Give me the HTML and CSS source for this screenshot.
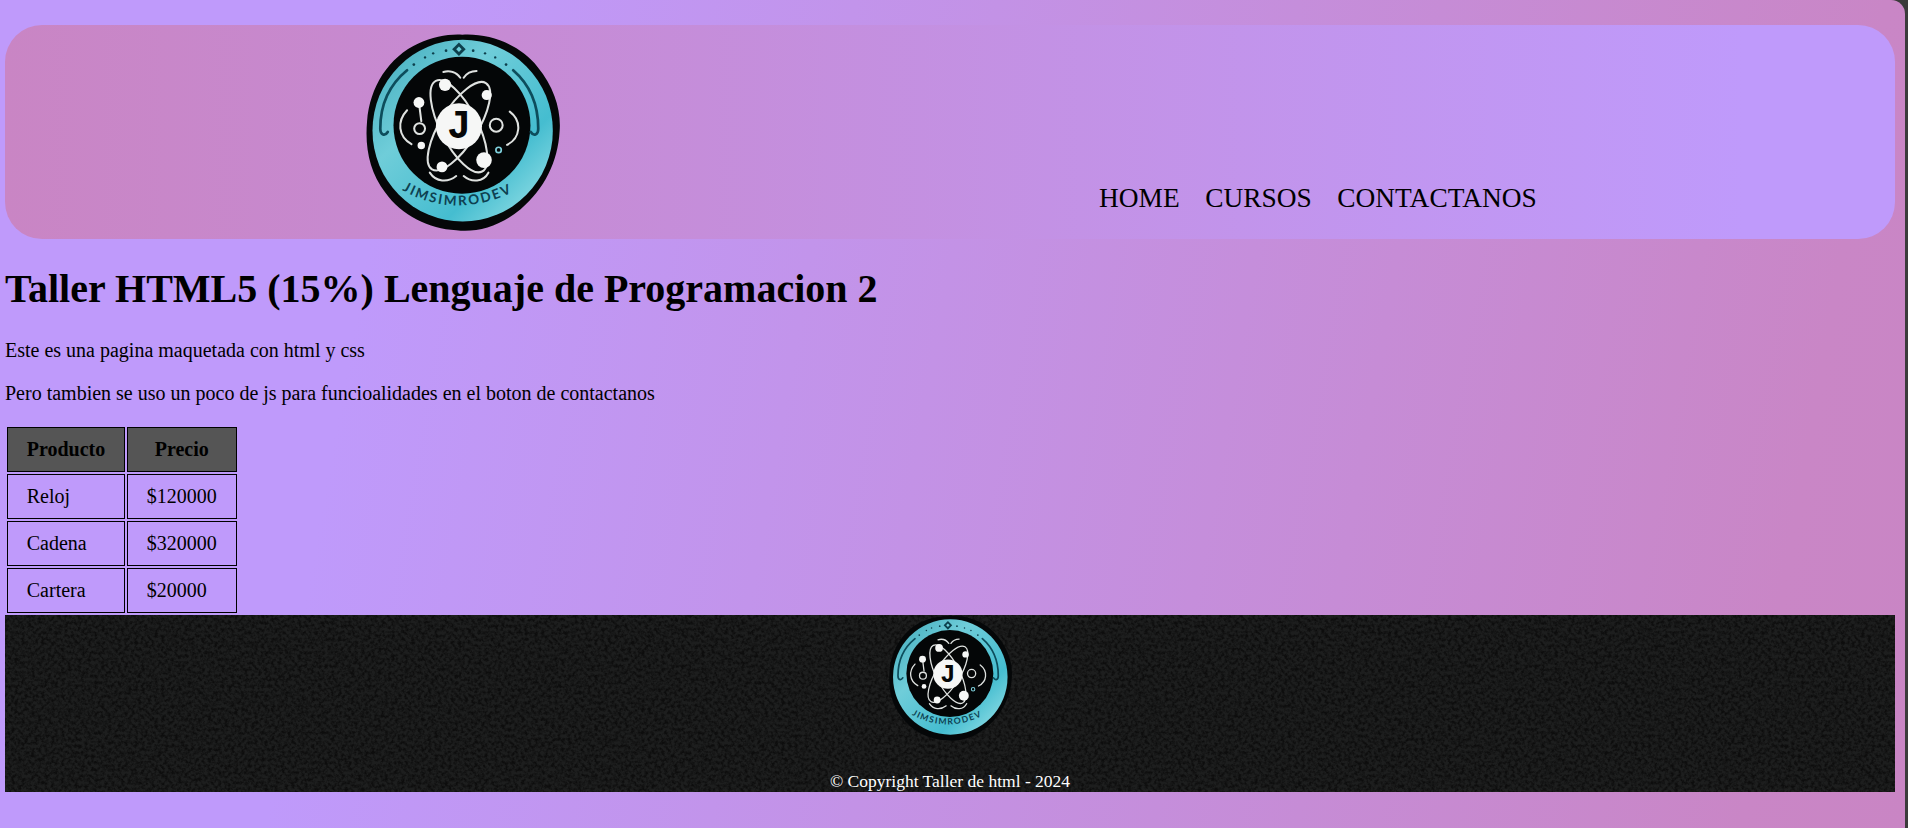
FILE: index.html
```html
<!DOCTYPE html>
<html lang="es">
<head>
<meta charset="utf-8">
<title>Taller HTML5</title>
<link rel="stylesheet" href="styles.css">
</head>
<body>
<svg class="defs" width="0" height="0" aria-hidden="true">
  <defs>
    <linearGradient id="teal" x1="0" y1="0" x2="1" y2="1">
      <stop offset="0" stop-color="#3fa9ba"/>
      <stop offset=".35" stop-color="#6fcdd9"/>
      <stop offset=".7" stop-color="#45bdd0"/>
      <stop offset=".88" stop-color="#7fd6e0"/>
      <stop offset="1" stop-color="#4fc0d2"/>
    </linearGradient>
    <filter id="grain" x="0" y="0" width="100%" height="100%" color-interpolation-filters="sRGB">
      <feTurbulence type="fractalNoise" baseFrequency=".3" numOctaves="3" seed="7"/>
      <feColorMatrix type="matrix" values="0 0 0 0 .05  0 0 0 0 .05  0 0 0 0 .05  2.6 0 0 0 -.95"/>
    </filter>
    <path id="nameArc" d="M190 503 Q 360 600 555 490"/>
    <symbol id="logo" viewBox="70 40 600 590">
      <path d="M368 45 C450 40 540 75 590 140 C640 200 660 270 655 330 C650 420 610 500 540 560 C480 610 410 630 350 622 C270 618 190 580 140 510 C95 450 80 380 87 300 C95 200 150 110 240 70 C280 52 330 42 368 45Z" fill="#050708"/>
      <ellipse cx="369" cy="328" rx="266" ry="268" fill="url(#teal)"/>
      <circle cx="367" cy="312" r="202" fill="#040607"/>
      <g class="ring-art">
        <path d="M205 150 C150 195 126 255 126 322 C126 342 140 345 148 332"/>
        <path d="M518 150 C570 195 592 255 592 322 C592 342 578 345 570 332"/>
      </g>
      <path class="dark-fill" d="M358 68 L378 88 L358 108 L338 88Z"/>
      <path class="teal-fill" d="M358 80 L366 88 L358 96 L350 88Z"/>
      <g class="dark-fill">
        <circle cx="320" cy="92" r="4"/><circle cx="400" cy="92" r="4"/>
        <circle cx="282" cy="100" r="3.5"/><circle cx="435" cy="100" r="3.5"/>
        <circle cx="258" cy="112" r="3.5"/><circle cx="465" cy="112" r="3.5"/>
        <circle cx="225" cy="133" r="4"/><circle cx="497" cy="133" r="4"/>
      </g>
      <g class="orbit">
        <ellipse cx="358" cy="315" rx="55" ry="150" transform="rotate(-27 358 315)"/>
        <ellipse cx="358" cy="315" rx="55" ry="150" transform="rotate(32 358 315)"/>
        <path d="M240 245 L247 300"/>
        <path d="M205 268 C175 300 178 345 218 368"/>
        <path d="M508 272 C545 300 540 350 500 370"/>
        <path d="M312 155 C330 150 350 155 362 172"/>
        <path d="M410 152 C395 152 380 160 372 172"/>
        <path d="M272 452 C290 480 325 482 350 462"/>
        <path d="M445 452 C430 480 395 482 372 462"/>
        <circle cx="242" cy="322" r="16"/>
        <circle cx="468" cy="312" r="19"/>
      </g>
      <circle cx="358" cy="315" r="68" fill="#f6f7f6"/>
      <g fill="#f6f7f6">
        <circle cx="317" cy="193" r="18"/><circle cx="440" cy="223" r="15"/>
        <circle cx="240" cy="245" r="16"/><circle cx="247" cy="372" r="11"/>
        <circle cx="432" cy="415" r="23"/><circle cx="308" cy="435" r="16"/>
      </g>
      <circle cx="475" cy="385" r="8" fill="none" stroke="#7fd0dc" stroke-width="5"/>
      <text class="logo-j" x="358" y="350" text-anchor="middle">J</text>
      <text class="logo-name"><textPath href="#nameArc">JIMSIMRODEV</textPath></text>
    </symbol>
  </defs>
</svg>

<header class="site-header">
  <svg class="logo-large"><use href="#logo"/></svg>
  <nav class="main-nav">
    <a href="#">HOME</a>
    <a href="#">CURSOS</a>
    <a href="#">CONTACTANOS</a>
  </nav>
</header>

<main>
  <h1>Taller HTML5 (15%) Lenguaje de Programacion 2</h1>
  <p>Este es una pagina maquetada con html y css</p>
  <p>Pero tambien se uso un poco de js para funcioalidades en el boton de contactanos</p>
  <table class="price-table">
    <thead>
      <tr><th>Producto</th><th>Precio</th></tr>
    </thead>
    <tbody>
      <tr><td>Reloj</td><td>$120000</td></tr>
      <tr><td>Cadena</td><td>$320000</td></tr>
      <tr><td>Cartera</td><td>$20000</td></tr>
    </tbody>
  </table>
</main>

<footer class="site-footer">
  <svg class="footer-noise" width="100%" height="100%" aria-hidden="true"><rect width="100%" height="100%" filter="url(#grain)"/></svg>
  <svg class="logo-small"><use href="#logo"/></svg>
  <p class="copyright">© Copyright Taller de html - 2024</p>
</footer>
</body>
</html>
```

FILE: styles.css
```css
html {
  background: #3b3b3b;
}

body {
  box-sizing: border-box;
  width: 1905px;
  height: 828px;
  margin: 0;
  padding: 25px 10px 0 5px;
  overflow: hidden;
  border-top-right-radius: 14px;
  background: linear-gradient(100deg, #bf9afb 0%, #bf9afb 20%, #c986c6 92%, #c985c4 100%);
  font-family: "Liberation Serif", "Times New Roman", serif;
  font-size: 20px;
  color: #000;
}

.defs {
  position: absolute;
}

.site-header {
  display: flex;
  align-items: flex-end;
  box-sizing: border-box;
  height: 214px;
  padding: 8px 0 0 356px;
  border-radius: 37px;
  background: linear-gradient(90deg, #c985c4 0%, #bf9afb 92%);
}

.logo-large {
  width: 204px;
  height: 200px;
  margin-right: 534px;
  align-self: flex-start;
}

.main-nav {
  display: flex;
  gap: 25.5px;
  padding-bottom: 25px;
  font-size: 27.4px;
}

.main-nav a {
  color: #000;
  text-decoration: none;
}

h1 {
  margin: 26px 0 27px;
  font-size: 40px;
}

p {
  margin: 20px 0;
}

.price-table {
  border-spacing: 2.5px;
}

.price-table th,
.price-table td {
  padding: 10px 18.75px;
  border: 1px solid #000;
  text-align: left;
}

.price-table th {
  background: #555;
  text-align: center;
}

.site-footer {
  position: relative;
  display: flex;
  flex-direction: column;
  align-items: center;
  justify-content: space-between;
  height: 177px;
  overflow: hidden;
  background: #1d1e1e;
  color: #fff;
}

.footer-noise {
  position: absolute;
  inset: 0;
}

.logo-small {
  position: relative;
  width: 131px;
  height: 127px;
}

.copyright {
  position: relative;
  margin: 0;
  font-size: 17.5px;
}

.ring-art {
  fill: none;
  stroke: #0d4d5c;
  stroke-width: 8;
  stroke-linecap: round;
}

.dark-fill {
  fill: #0d3f4c;
}

.teal-fill {
  fill: #6fcfdb;
}

.orbit {
  fill: none;
  stroke: #dfe2e0;
  stroke-width: 6;
  stroke-linecap: round;
}

.logo-j {
  font-family: "Liberation Mono", monospace;
  font-weight: 700;
  font-size: 118px;
  fill: #070808;
}

.logo-name {
  font-family: "Lato", sans-serif;
  font-weight: 700;
  font-size: 40px;
  letter-spacing: 6px;
  fill: #0d4050;
}
```
